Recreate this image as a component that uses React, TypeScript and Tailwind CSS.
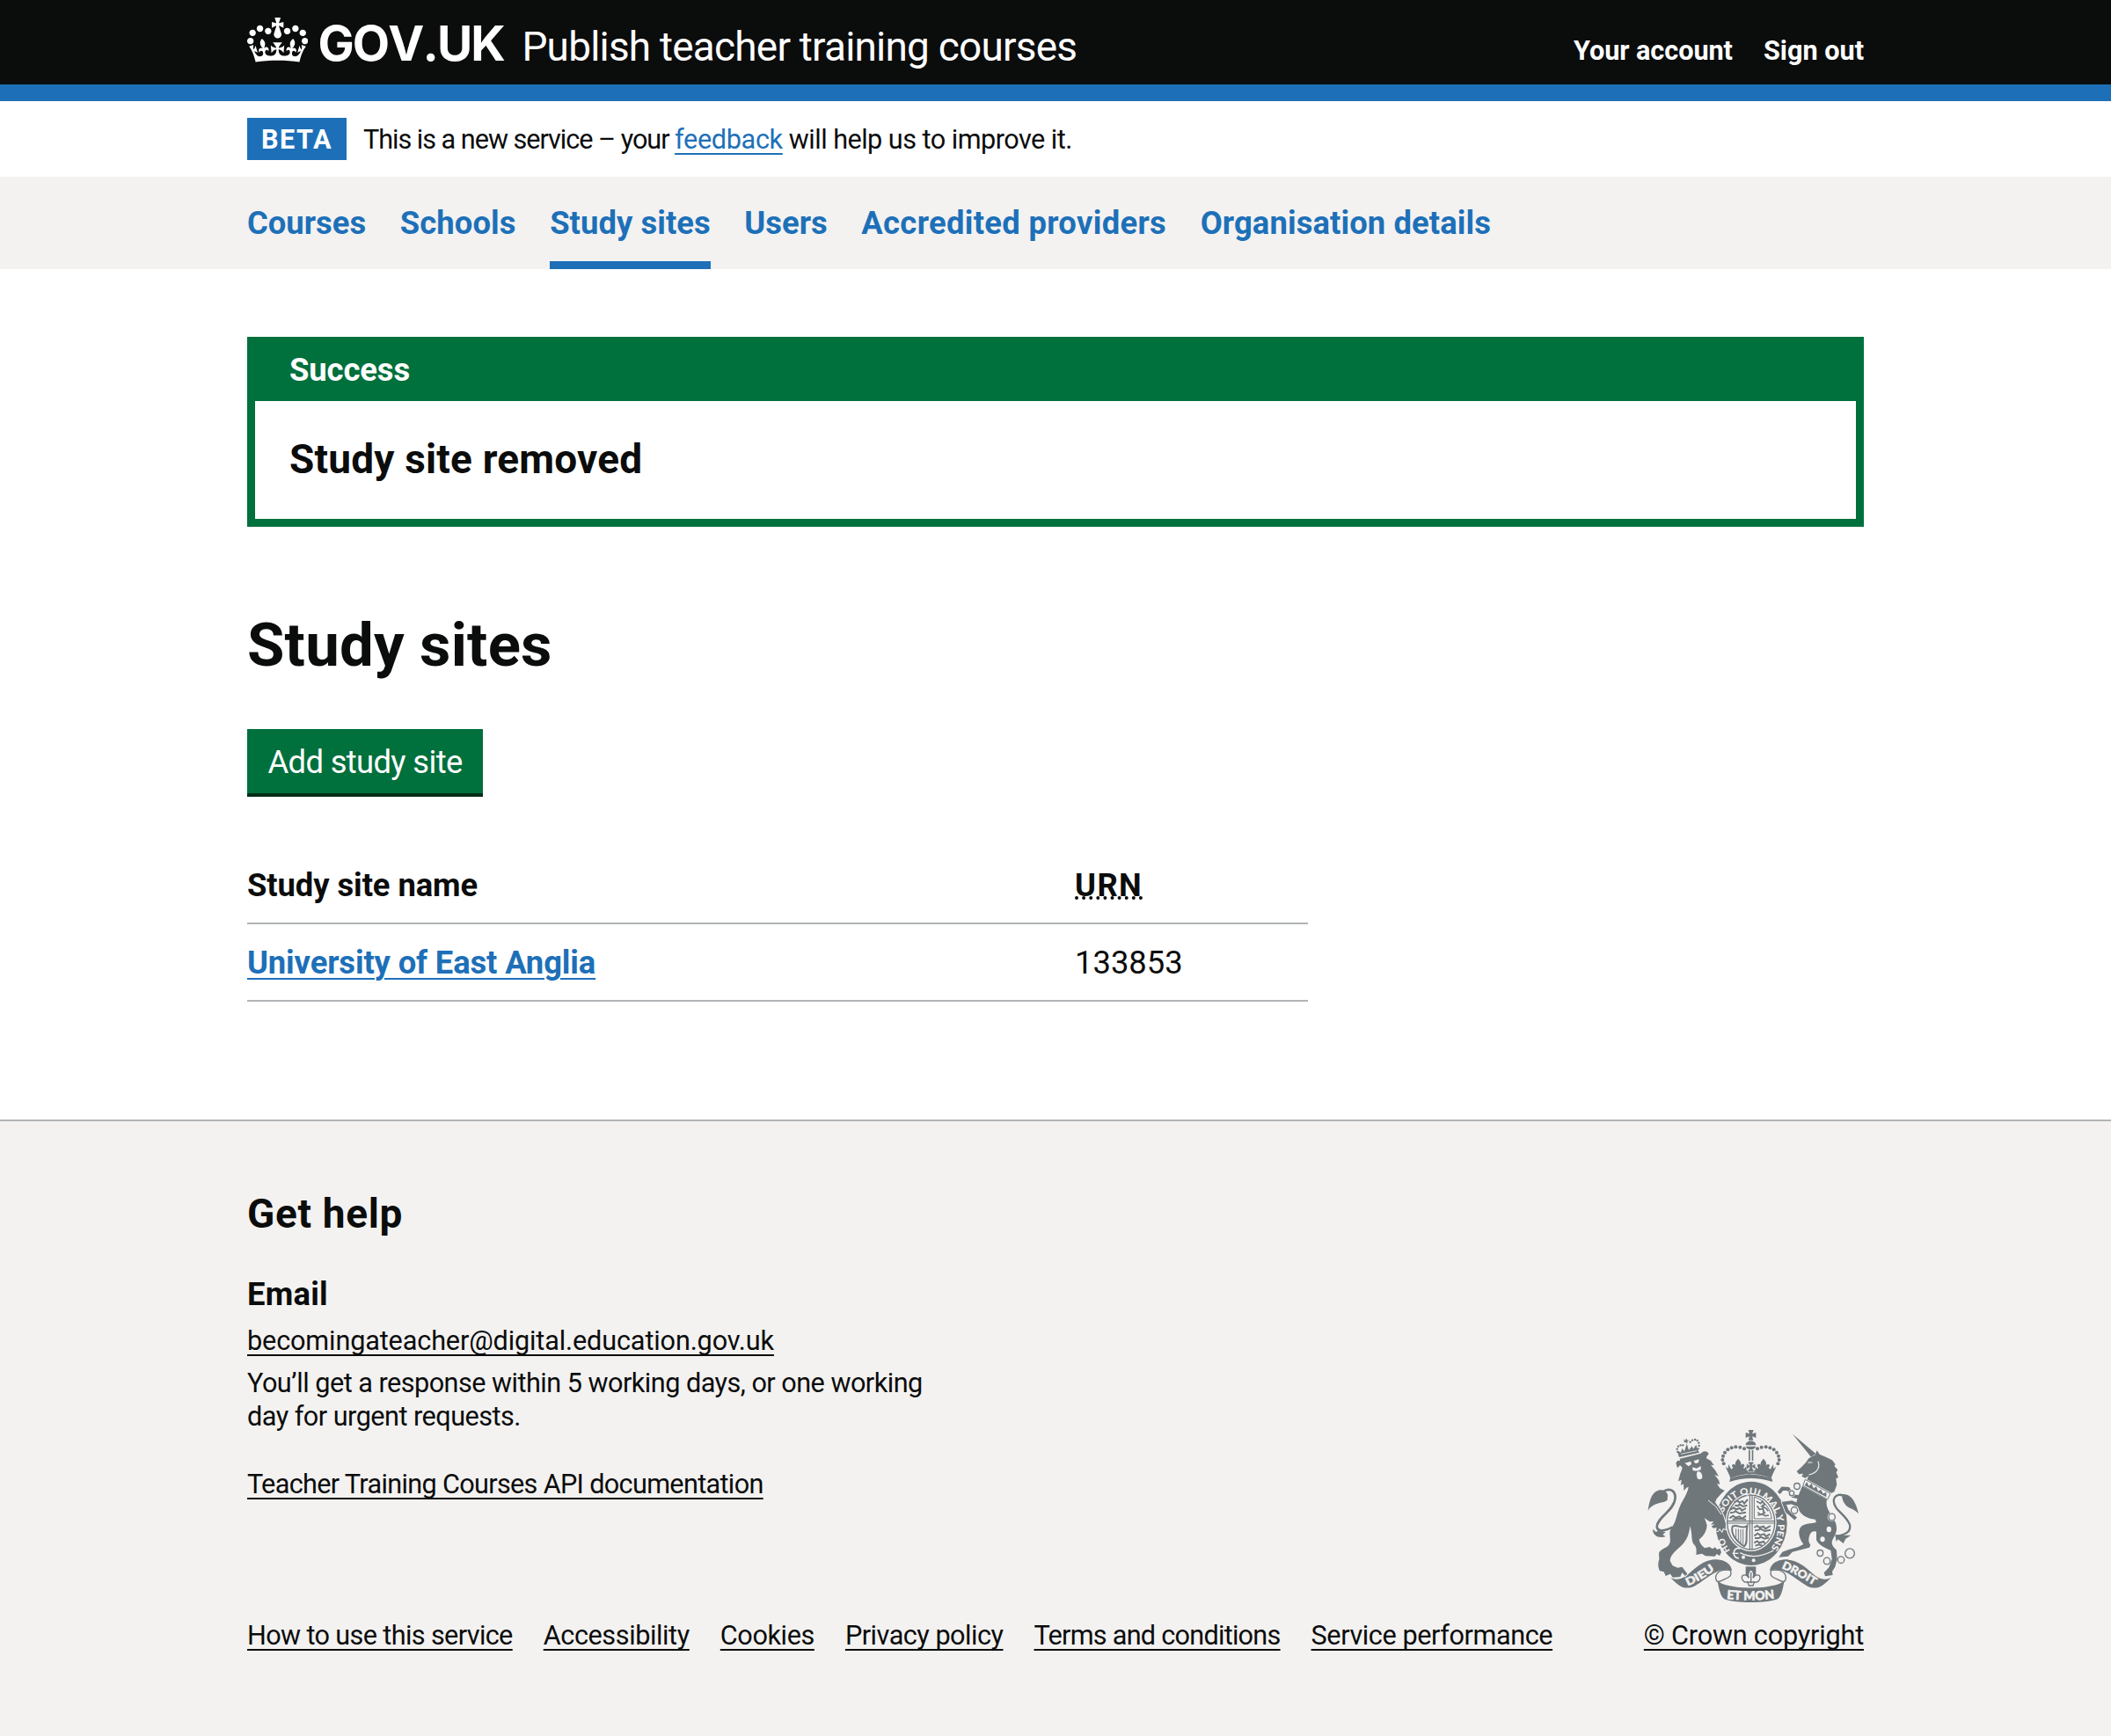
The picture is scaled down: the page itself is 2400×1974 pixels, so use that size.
import type { ReactNode } from "react";

const GREY = "#6f777b";
const PAPER = "#f3f2f1";

function Crown() {
  return (
    <svg viewBox="0 0 132 97" className="h-[51px] w-[69.4px] shrink-0" fill="#fff" aria-hidden="true">
      <path
        fillRule="evenodd"
        d="M25 30.2c3.5 1.5 7.7-.2 9.1-3.7 1.5-3.6-.2-7.8-3.9-9.2-3.6-1.4-7.6.3-9.1 3.9-1.4 3.5.3 7.5 3.9 9zM9 39.5c3.6 1.5 7.8-.2 9.2-3.7 1.5-3.6-.2-7.8-3.9-9.1-3.6-1.5-7.6.2-9.1 3.8-1.4 3.5.3 7.5 3.8 9zM4.4 57.2c3.5 1.5 7.7-.2 9.1-3.8 1.5-3.6-.2-7.7-3.9-9.1-3.5-1.5-7.6.3-9.1 3.8-1.4 3.5.3 7.6 3.9 9.1zm38.3-21.4c3.5 1.5 7.7-.2 9.1-3.8 1.5-3.6-.2-7.7-3.9-9.1-3.6-1.5-7.6.3-9.1 3.8-1.3 3.6.4 7.7 3.9 9.1zm64.4-5.6c-3.6 1.5-7.8-.2-9.1-3.7-1.5-3.6.2-7.8 3.8-9.2 3.6-1.4 7.7.3 9.2 3.9 1.3 3.5-.4 7.5-3.9 9zm15.9 9.3c-3.6 1.5-7.7-.2-9.1-3.7-1.5-3.6.2-7.8 3.7-9.1 3.6-1.5 7.7.2 9.2 3.8 1.5 3.5-.3 7.5-3.8 9zm4.7 17.7c-3.6 1.5-7.8-.2-9.2-3.8-1.5-3.6.2-7.7 3.9-9.1 3.6-1.5 7.7.3 9.2 3.8 1.3 3.5-.4 7.6-3.9 9.1zM89.3 35.8c-3.6 1.5-7.8-.2-9.2-3.8-1.4-3.6.2-7.7 3.9-9.1 3.6-1.5 7.7.3 9.2 3.8 1.4 3.6-.3 7.7-3.9 9.1zM69.7 17.7l8.9 4.7V9.3l-8.9 2.8c-.2-.3-.5-.6-.9-.9L72.4 0H59.6l3.5 11.2c-.3.3-.6.5-.9.9l-8.8-2.8v13.1l8.8-4.7c.3.3.6.7.9.9l-5 15.4v.1c-.2.8-.4 1.6-.4 2.4 0 4.1 3.1 7.5 7 8.1h.2c.3 0 .7.1 1 .1.4 0 .7 0 1-.1h.2c4-.6 7.1-4.1 7.1-8.1 0-.8-.1-1.7-.4-2.4V34l-5.1-15.4c.4-.2.7-.6 1-.9zM66 92.8c16.9 0 32.8 1.1 47.1 3.2 4-16.9 8.9-26.7 14-33.5l-9.6-3.4c1 4.9 1.1 7.2 0 10.2-1.5-1.4-3-4.3-4.2-8.7L108.6 76c2.8-2 5-3.2 7.5-3.3-4.4 9.4-10 11.9-13.6 11.2-4.3-.8-6.3-4.6-5.6-7.9 1-4.7 5.7-5.9 8-.5 4.3-8.7-3-11.4-7.6-8.8 7.1-7.2 7.9-13.5 2.1-21.1-8 6.1-8.1 12.3-4.5 20.8-4.7-5.4-12.1-2.5-9.5 6.2 3.4-5.2 7.9-2 7.2 3.1-.6 4.3-6.4 7.8-13.5 7.2-10.3-.9-10.9-8-11.2-13.8 2.5-.5 7.1 1.8 11 7.3L80.2 60c-4.1 4.4-8 5.3-12.3 5.4 1.4-4.4 8-11.6 8-11.6H55.5s6.4 7.2 7.9 11.6c-4.2-.1-8-1-12.3-5.4l1.4 16.4c3.9-5.5 8.5-7.7 10.9-7.3-.3 5.8-.9 12.8-11.1 13.8-7.2.6-12.9-2.9-13.5-7.2-.7-5 3.8-8.3 7.1-3.1 2.7-8.7-4.6-11.6-9.4-6.2 3.7-8.5 3.6-14.7-4.6-20.8-5.8 7.6-5 13.9 2.2 21.1-4.7-2.6-11.9.1-7.7 8.8 2.3-5.5 7.1-4.2 8.1.5.7 3.3-1.3 7.1-5.7 7.9-3.5.7-9-1.8-13.5-11.2 2.5.1 4.7 1.3 7.5 3.3l-4.7-15.4c-1.2 4.4-2.7 7.2-4.3 8.7-1.1-3-.9-5.3 0-10.2l-9.5 3.4c5 6.9 9.9 16.7 14 33.5 14.8-2.1 30.8-3.2 47.7-3.2z"
      />
    </svg>
  );
}

const crownBeads = [
  [400, 139], [386, 134], [371, 133], [357, 136], [344, 142], [334, 152], [328, 164], [326, 177], [330, 190],
];
const lionCrownBeads = [
  [113, 90], [111, 80], [115, 71], [123, 67], [131, 67], [156, 56], [163, 50], [172, 48], [180, 51], [185, 59], [186, 69], [183, 79],
];
const chainRings = [
  [166, 207, 10], [148, 231, 8], [157, 289, 11], [285, 312, 11], [245, 435, 10], [268, 462, 11], [316, 458, 11], [346, 436, 16],
];

function HalfCrown() {
  return (
    <g>
      {crownBeads.map(([x, y]) => (
        <circle key={x} cx={x} cy={y} r="6" />
      ))}
      <path d="M423 250 V208 L408 214 L411 195 L400 207 L397 204 L401 197 C400 190 392 190 388 196 C392 186 385 180 379 173 C372 181 367 187 371 196 C366 190 358 191 358 198 L362 204 L356 209 L346 192 L345 207 L336 200 C342 215 349 225 353 240 Q385 226 423 226 Z" />
    </g>
  );
}

function RibbonCurl() {
  return (
    <g>
      <path d="M148 578 C175 592 195 580 215 562 C245 535 270 517 305 517 C340 519 356 536 358 556 C345 548 325 550 308 558 C280 570 255 595 228 609 C195 621 180 610 148 578Z" />
      <path
        d="M352 553 C360 570 350 578 335 583 C320 590 312 596 306 590 C298 575 306 556 330 553 Z"
        fill={PAPER}
        stroke={GREY}
        strokeWidth="4"
      />
    </g>
  );
}

function RoyalArms() {
  return (
    <svg viewBox="55 66 752 600" className="h-[200px] w-[250.7px]" fill={GREY} aria-hidden="true">
      {/* garter and shield */}
      <ellipse cx="424" cy="394" rx="122" ry="143" />
      <ellipse cx="423" cy="390" rx="87" ry="99" fill={PAPER} />
      <ellipse cx="423" cy="390" rx="81" ry="93" fill={PAPER} stroke={GREY} strokeWidth="4" />
      <g stroke={GREY} strokeWidth="4" fill="none">
        <path d="M419 298V482M427 298V482M343 386H503M343 393H503" strokeWidth="3.5" />
        <path d="M434 303V378H494C490 345 470 315 434 303Z" strokeWidth="3" />
        <path d="M442 318l14 8l6-8l8 12l-10 6l14 6l8 10M444 334l8 12l10-2l8 14l-14 6l-10-8M446 366l14-4l12 6l12-2M462 330l4 26" strokeWidth="5" />
        <g strokeWidth="6">
          <path d="M366 322l10-6l8 6l10-4l6 8l12-14M368 332l12 2l4-6l12 8l14-4" />
          <path d="M352 348l12-8l8 6l14-4l6 8l14-8M352 358l12-2l6-4l14 8l22-4" />
          <path d="M350 376l12-8l8 6l14-4l8 8l14-10M360 380l24-2l22 2" />
          <path d="M434 408l10-6l8 6l14-4l6 8l18-10M436 418l14-2l6-4l14 8l20-4" />
          <path d="M434 436l12-8l8 6l14-4l6 8l14-8M436 444l14 0l6-4l14 6l14-4" />
          <path d="M434 460l10-6l8 6l14-4l4 6M438 470l12-4l12 4" />
        </g>
        <path d="M360 404C354 424 366 450 400 472C414 462 404 436 410 402C396 416 378 396 360 404Z" strokeWidth="6" />
        <path d="M372 412V442M380 412V452M388 414V460M396 414V464" strokeWidth="3" />
      </g>
      <path id="garter-left" d="M355 489A97 111 0 0 1 328 400" fill="none" />
      <path id="garter-line" d="M328 358A98 112 0 1 1 487 484" fill="none" />
      <g fill={PAPER} className="font-['Lato'] text-[31px] font-black">
        <text>
          <textPath href="#garter-left" startOffset="4">HO</textPath>
        </text>
        <text>
          <textPath href="#garter-line" textLength="378" lengthAdjust="spacingAndGlyphs">
            SOIT QUI MAL Y PENSE
          </textPath>
        </text>
      </g>
      <path d="M386 494C420 512 460 508 500 486" stroke={PAPER} strokeWidth="4" fill="none" />
      <path d="M386 480A15 17 0 1 0 382 512" stroke={PAPER} strokeWidth="5" fill="none" />
      <path d="M360 496H380" stroke={PAPER} strokeWidth="4" />
      <circle cx="397" cy="509" r="6" fill={PAPER} />
      <circle cx="432" cy="520" r="6" fill={PAPER} />

      {/* crown */}
      <path d="M352 256 C358 240 385 232 423 232 S488 240 495 256 C470 238 376 238 352 256Z" fill={PAPER} stroke={PAPER} strokeWidth="10" />
      <HalfCrown />
      <g transform="translate(845 0) scale(-1 1)">
        <HalfCrown />
      </g>
      <path d="M352 240Q423 214 494 240L497 252Q423 228 350 252Z" />
      <path d="M414 75H432L427 88L440 84V102L427 97L431 110H414L418 97L405 102V84L418 88Z" />
      <path d="M405 127C405 108 440 108 440 127ZM405 131H440C436 139 430 142 423 142S409 139 405 131Z" />
      <path d="M415 144H420V180H415ZM426 144H431V180H426Z" />
      <path d="M412 184H434L427 196L438 190V210L427 202L434 218H412L419 202L408 210V190L419 196Z" stroke={PAPER} strokeWidth="1.5" />

      {/* ribbon with motto */}
      <RibbonCurl />
      <g transform="translate(845 0) scale(-1 1)">
        <RibbonCurl />
      </g>
      <path d="M308 588 C335 622 510 622 537 588 C532 615 528 640 515 651 C480 667 365 667 331 651 C317 640 313 610 308 588Z" />
      <path id="motto-left" d="M207 607Q260 585 305 548" fill="none" />
      <path id="motto-right" d="M527 546Q580 568 644 609" fill="none" />
      <path id="motto-mid" d="M340 651Q423 660 506 650" fill="none" />
      <g fill={PAPER} stroke={PAPER} strokeWidth="1.5" className="font-['Lato'] text-[42px] font-black">
        <text>
          <textPath href="#motto-mid" textLength="164" lengthAdjust="spacingAndGlyphs">ET MON</textPath>
        </text>
        <g className="text-[37px]">
          <text>
            <textPath href="#motto-left" textLength="108" lengthAdjust="spacingAndGlyphs">DIEU</textPath>
          </text>
          <text>
            <textPath href="#motto-right" textLength="126" lengthAdjust="spacingAndGlyphs">DROIT</textPath>
          </text>
        </g>
      </g>
      <path d="M405 541H440V580H405Z" />
      <path
        d="M423 550C434 560 434 570 430 580C438 566 454 566 454 580C452 592 444 596 434 594L430 606H416L412 594C402 596 394 592 392 580C392 566 408 566 416 580C412 570 412 560 423 550Z"
        fill={PAPER}
        stroke={GREY}
        strokeWidth="4"
      />
      <path d="M423 560V598M408 594H438" stroke={GREY} strokeWidth="4" />

      {/* lion */}
      <g transform="translate(60 60)">
        {lionCrownBeads.map(([x, y]) => (
          <circle key={`${x}-${y}`} cx={x} cy={y} r="3.6" />
        ))}
        <path d="M130 48L140 50L142 43L146 50L152 50L146 55L146 62L140 57L133 58L137 53Z" />
        <path d="M115 100L114 86L124 92L128 78L136 88L144 62L151 84L162 70L166 80L176 66L182 84L187 92L118 108Z" />
        <path d="M124 97L178 86" stroke={PAPER} strokeWidth="2.5" />
        <path
          stroke={PAPER}
          strokeWidth="6"
          paintOrder="stroke"
          d="M107 128L113 119L121 121L120 113L190 96L202 88L214 89L219 97L212 105L211 112L226 120L237 136L226 134L241 152L253 173L239 168L253 186L257 200L247 199L257 214L273 222L262 232L246 250L241 262L258 286L269 308L277 335L276 354L268 350L264 361L256 351L250 360L244 359L246 348L235 350L228 344L240 336L226 338L236 327L222 328L208 318L184 302C196 308 206 314 207 322L213 340C212 358 204 375 186 389C188 401 196 411 206 418L222 414L232 421L240 415L248 423L257 419L262 432L256 444L246 438L240 446L208 445L196 437L176 441C177 428 179 414 168 405C158 392 164 370 155 343C152 375 142 392 130 405C110 425 87 440 87 462L96 478L113 485L128 482L138 495L146 506L139 513L128 502L122 516L96 518L88 506L72 513L66 499L52 496C46 484 46 472 48 463C53 453 47 444 50 432C60 418 78 418 84 405C94 386 78 368 92 350L103 330C111 310 113 290 124 268C136 246 148 226 150 209L143 212L134 222L133 199L124 204L126 185L115 190L120 171C122 160 130 150 128 142L121 136L112 145Z"
        />
        <path d="M217 255L243 276L262 304" stroke={PAPER} strokeWidth="3" fill="none" />
        <path d="M137 128L158 122L160 132L150 139ZM167 121L186 115L184 126L174 130ZM164 142L178 146L192 138L192 150C180 156 172 156 164 152Z" fill={PAPER} />
        <path d="M182 156C192 156 198 166 197 178C194 186 182 186 179 178C180 170 174 164 182 156Z" fill={PAPER} />
        <path d="M12 291C16 262 22 226 52 220C66 219 76 226 79 236L78 254C66 264 44 262 30 272C20 278 14 284 12 291Z" />
        <path d="M62 226C90 208 108 226 104 252C98 292 44 312 42 345C44 362 66 362 96 346" fill="none" stroke={GREY} strokeWidth="8" />
        <path d="M28 353C28 375 46 385 72 379L62 372L72 364L46 356L40 364Z" />
      </g>

      {/* unicorn */}
      <g transform="translate(414 60)">
        <path d="M151 29L230 96L214 107Z" />
        <path d="M228 100L234 85L243 98L264 107L286 118L297 133L293 138L305 151L300 160L307 177L299 181L302 202L293 226L284 230L200 184L206 172L194 179L182 173L187 164L172 166L165 156L181 142L196 126L206 112Z" />
        <path d="M238 122C248 150 226 164 206 168M203 126L218 126" stroke={PAPER} strokeWidth="3.5" fill="none" />
        <path d="M194 184L280 232L270 252L186 205Z" fill={PAPER} stroke={GREY} strokeWidth="3" />
        <path d="M192 204L200 192L206 206L216 198L222 214L232 208L238 224L248 218L254 232L266 228L266 244Z" />
        <g fill="none" stroke={PAPER} strokeWidth="17">
          <path d="M182 246L152 240L136 216L116 215L104 230" />
          <path d="M182 276L148 262L122 265L132 292L162 318" />
        </g>
        <path d="M184 206L268 253C262 275 275 292 286 310C302 335 306 352 295 375C286 392 280 398 291 415L301 425L303 455L296 482L286 498L288 510L262 514L258 502L275 484L285 455L281 426C262 418 240 408 232 390L232 362C214 356 206 372 206 395L212 408L208 416L150 431L136 446L104 449L116 431L136 424L170 414L188 405C174 386 166 362 180 345C194 332 214 336 232 330L228 320C200 318 178 304 172 286L164 262L170 240L176 226Z" />
        <g fill="none" stroke={GREY} strokeWidth="12">
          <path d="M182 246L152 240L136 216L116 215L104 230" />
          <path d="M182 276L148 262L122 265L132 292L162 318" />
        </g>
        <g fill="none" stroke={PAPER} strokeWidth="8">
          {chainRings.slice(0, 4).map(([x, y, r]) => (
            <circle key={x} cx={x} cy={y} r={r} />
          ))}
        </g>
        <g fill={PAPER} stroke={GREY} strokeWidth="4">
          {chainRings.map(([x, y, r]) => (
            <ellipse key={x} cx={x} cy={y} rx={r} ry={r + 0.5} />
          ))}
        </g>
        <ellipse cx="275" cy="354" rx="8" ry="10" fill={PAPER} />
        <ellipse cx="253" cy="388" rx="8" ry="9" fill={PAPER} />
        <path d="M302 378C330 372 352 362 346 338C332 302 292 290 291 256C294 234 318 230 334 246" fill="none" stroke={GREY} strokeWidth="7" />
        <path d="M320 234C350 230 368 262 376 301C360 282 342 284 331 270C322 258 318 246 320 234Z" />
        <path d="M296 372L325 374L350 374L332 386L324 402L306 388L300 396Z" />
      </g>
    </svg>
  );
}

function FooterLink({ children, className = "" }: { children: ReactNode; className?: string }) {
  return (
    <a
      href="#"
      className={`whitespace-nowrap underline decoration-2 underline-offset-[5px] [text-decoration-skip-ink:none] ${className}`}
    >
      {children}
    </a>
  );
}

const navItems = [
  { label: "Courses", tracking: "" },
  { label: "Schools", tracking: "tracking-[0.1px]" },
  { label: "Study sites", tracking: "tracking-[0.06px]", current: true },
  { label: "Users", tracking: "" },
  { label: "Accredited providers", tracking: "tracking-[0.32px]" },
  { label: "Organisation details", tracking: "tracking-[0.1px]" },
];

const metaLinks = [
  { label: "How to use this service", tracking: "tracking-[-0.63px]" },
  { label: "Accessibility", tracking: "tracking-[-0.41px]" },
  { label: "Cookies", tracking: "tracking-[-0.4px]" },
  { label: "Privacy policy", tracking: "tracking-[-0.5px]" },
  { label: "Terms and conditions", tracking: "tracking-[-0.74px]" },
  { label: "Service performance", tracking: "tracking-[-0.42px]" },
];

export default function App() {
  return (
    <div className="flex min-h-[1974px] flex-col bg-white font-['Roboto',sans-serif] text-[#0b0c0c]">
      <header className="h-[115px] border-b-[19px] border-[#1d70b8] bg-[#0b0c0c] text-white">
        <div className="mx-[281px] flex h-[96px] items-start">
          <div className="pt-[20px]">
            <Crown />
          </div>
          <span className="mt-[14px] ml-[11px] w-[232px] font-['Inter',sans-serif] text-[55px] leading-[70px] font-bold tracking-[-1.9px] [font-kerning:none]">
            GOV.UK
          </span>
          <span className="mt-[23px] text-[45.95px] leading-[60px] tracking-[-0.78px]">
            Publish teacher training courses
          </span>
          <nav className="mt-[39px] ml-auto flex gap-[35px] text-[30.63px] leading-[38px] font-bold">
            <a href="#" className="tracking-[-0.05px]">Your account</a>
            <a href="#">Sign out</a>
          </nav>
        </div>
      </header>

      <div className="mx-[281px] flex h-[86px] items-center">
        <strong className="flex h-[48px] w-[113px] items-center justify-center bg-[#1d70b8] pt-[2px] text-[30.63px] leading-[38px] tracking-[1.5px] text-white">
          BETA
        </strong>
        <span className="mt-[2px] ml-[19px] text-[30.63px] leading-[38px] whitespace-pre">
          <span className="tracking-[-1.03px]">{"This is a new service – your "}</span>
          <a
            href="#"
            className="tracking-[-0.35px] text-[#1d70b8] underline decoration-2 underline-offset-[5px] [text-decoration-skip-ink:none]"
          >
            feedback
          </a>
          <span className="tracking-[-0.53px]">{" will help us to improve it."}</span>
        </span>
      </div>

      <nav className="h-[105px] bg-[#f3f2f1] px-[281px]">
        <ul className="flex h-full gap-[38.6px] text-[36.4px] leading-[48px] font-bold text-[#1d70b8]">
          {navItems.map((item) => (
            <li
              key={item.label}
              className={`border-b-[9px] pt-[29px] ${item.current ? "border-[#1d70b8]" : "border-transparent"}`}
            >
              <a href="#" className={item.tracking}>{item.label}</a>
            </li>
          ))}
        </ul>
      </nav>

      <main className="mx-[281px] h-[967px] pt-[77px]">
        <section className="border-[9.5px] border-t-0 border-[#00703c]">
          <h2 className="h-[72.5px] bg-[#00703c] pt-[14px] pl-[39px] text-[36.4px] leading-[48px] font-bold tracking-[-0.1px] text-white">
            Success
          </h2>
          <p className="flex h-[134px] items-center pb-[1px] pl-[39px] text-[45.95px] leading-[58px] font-bold tracking-[0.2px]">
            Study site removed
          </p>
        </section>

        <h1 className="mt-[97px] text-[68.9px] leading-[76px] font-bold tracking-[0.2px]">Study sites</h1>

        <button
          type="button"
          className="mt-[57px] flex h-[73px] w-[268px] items-center justify-center bg-[#00703c] pt-[4px] text-[36.4px] leading-[48px] tracking-[-0.65px] text-white shadow-[0_4px_0_#002d18]"
        >
          Add study site
        </button>

        <table className="mt-[60px] w-[1206px] border-collapse text-left text-[36.4px] leading-[48px]">
          <thead>
            <tr className="h-[88px] border-b-2 border-[#b1b4b6]">
              <th className="w-[941px] p-0 pt-[3px] font-bold tracking-[-0.08px]">Study site name</th>
              <th className="p-0 pt-[3px] font-bold">
                <abbr
                  title="Unique reference number"
                  className="tracking-[1.4px] underline decoration-dotted decoration-[3.7px] underline-offset-[1px] [text-decoration-skip-ink:none]"
                >
                  URN
                </abbr>
              </th>
            </tr>
          </thead>
          <tbody>
            <tr className="h-[88px] border-b-2 border-[#b1b4b6]">
              <td className="p-0 pt-[3px]">
                <a
                  href="#"
                  className="font-bold tracking-[-0.14px] text-[#1d70b8] underline decoration-2 underline-offset-[5px]"
                >
                  University of East Anglia
                </a>
              </td>
              <td className="p-0 pt-[3px]">133853</td>
            </tr>
          </tbody>
        </table>
      </main>

      <footer className="flex-1 border-t-2 border-[#b1b4b6] bg-[#f3f2f1] px-[281px] pt-[76px] text-[30.63px] leading-[38.5px]">
        <div className="flex h-[528px] items-end justify-between">
          <div className="h-full">
            <h2 className="text-[45.95px] leading-[58px] font-bold tracking-[0.67px]">Get help</h2>
            <h3 className="mt-[39px] text-[36.4px] leading-[48px] font-bold tracking-[0.25px]">Email</h3>
            <p className="mt-[10px]">
              <FooterLink className="tracking-[-0.14px]">becomingateacher@digital.education.gov.uk</FooterLink>
            </p>
            <p className="mt-[9px] tracking-[-0.52px]">
              You’ll get a response within 5 working days, or one working
              <br />
              day for urgent requests.
            </p>
            <p className="mt-[38px]">
              <FooterLink className="tracking-[-0.67px]">Teacher Training Courses API documentation</FooterLink>
            </p>
            <ul className="mt-[134px] flex gap-[35px]">
              {metaLinks.map((link) => (
                <li key={link.label}>
                  <FooterLink className={link.tracking}>{link.label}</FooterLink>
                </li>
              ))}
            </ul>
          </div>
          <div className="flex flex-col items-end">
            <RoyalArms />
            <p className="mt-[18px]">
              <FooterLink className="tracking-[-0.2px]">© Crown copyright</FooterLink>
            </p>
          </div>
        </div>
      </footer>
    </div>
  );
}
